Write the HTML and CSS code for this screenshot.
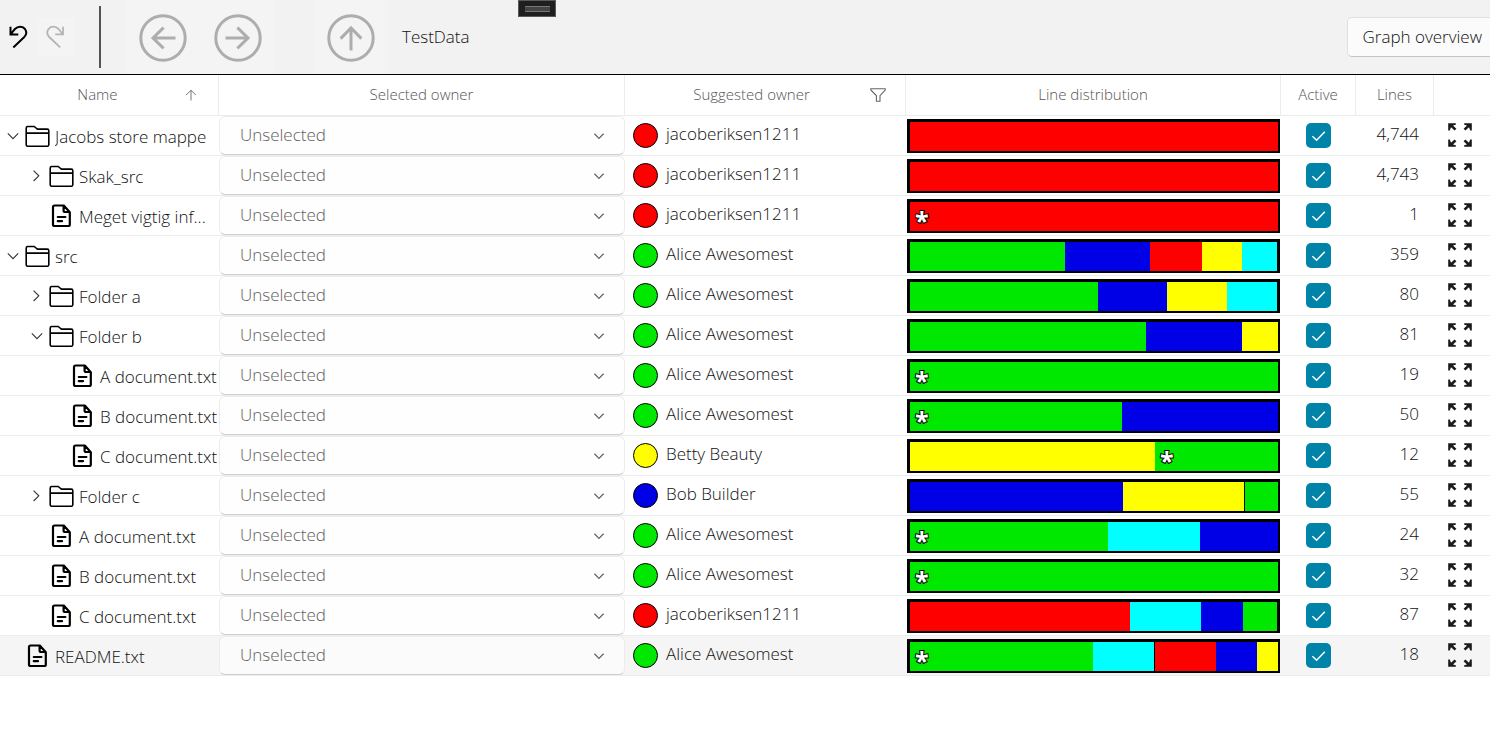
FILE: index.html
```html
<!DOCTYPE html>
<html lang="en">
<head>
<meta charset="utf-8">
<title>TestData</title>
<link rel="stylesheet" href="styles.css">
</head>
<body>
<svg class="sprite" aria-hidden="true">
  <symbol id="folder" viewBox="0 0 25 24"><path d="M1.2 20.7V4.1Q1.2 2.5 2.8 2.5H9.2L12.4 5.1H22.2Q23.8 5.1 23.8 6.7V20.7Q23.8 22.3 22.2 22.3H2.8Q1.2 22.3 1.2 20.7ZM1.2 9.1H23.8" fill="none" stroke="#000" stroke-width="1.6" stroke-linejoin="round"/></symbol>
  <symbol id="doc" viewBox="0 0 25 24"><path d="M13.5 1.5H5.6Q4 1.5 4 3.1V20.4Q4 22 5.6 22H19.2Q20.8 22 20.8 20.4V8.2L14.8 1.5ZM14.6 1.8V6.4Q14.6 8 16.2 8H20.4M8.8 13H16.4M8.8 17.2H13" fill="none" stroke="#000" stroke-width="2.2" stroke-linejoin="round" stroke-linecap="round"/></symbol>
  <symbol id="down" viewBox="0 0 12 12"><path d="M.8 3.4L6 8.6L11.2 3.4" fill="none" stroke="#333" stroke-width="1.1"/></symbol>
  <symbol id="right" viewBox="0 0 12 12"><path d="M2.6 .6L7.8 5.8L2.6 11" fill="none" stroke="#333" stroke-width="1.1"/></symbol>
  <symbol id="drop" viewBox="0 0 12 12"><path d="M1.4 3.8L6 8.4L10.6 3.8" fill="none" stroke="#666" stroke-width="1.3"/></symbol>
  <symbol id="check" viewBox="0 0 25 25"><path d="M6.4 13.2L10.6 17.2L18.8 8.8" fill="none" stroke="#fff" stroke-width="1.5"/></symbol>
  <symbol id="expand" viewBox="0 0 24 24"><g id="corner"><path d="M.2 .2H7.8V1.8L5 2.6L8.4 5.8L6.6 7.4L3 4.2L1.8 7.6H.2Z" fill="#1a1a1a"/></g><use href="#corner" transform="matrix(-1 0 0 1 24 0)"/><use href="#corner" transform="matrix(1 0 0 -1 0 24)"/><use href="#corner" transform="matrix(-1 0 0 -1 24 24)"/></symbol>
</svg>

<header class="toolbar">
  <button class="tool small" aria-label="Undo"><svg width="20" height="24" viewBox="0 0 20 24"><path d="M1.5 1.8V9.4H9.3M1.7 9.2L5.9 4C9.3 .6 13.9 1.2 16.1 4.2C17.9 7 17.5 9.8 15.3 12L4.3 22.4" fill="none" stroke="#000" stroke-width="2"/></svg></button>
  <button class="tool small pale" aria-label="Redo" disabled><svg width="20" height="24" viewBox="0 0 20 24"><path d="M17 1.8V9.4H9.2M16.8 9.2L12.6 4C9.2 .6 4.6 1.2 2.4 4.2C.6 7 1 9.8 3.2 12L14.2 22.4" fill="none" stroke="#b4b4b4" stroke-width="1.8"/></svg></button>
  <span class="divider"></span>
  <button class="tool nav pale" aria-label="Back" disabled><svg width="50" height="50" viewBox="0 0 50 50"><g fill="none" stroke="#adadad" stroke-width="3"><circle cx="25" cy="25" r="22.2"/><path d="M37.5 25H15M25.6 14.6L15 25L25.6 35.4"/></g></svg></button>
  <button class="tool nav pale" aria-label="Forward" disabled><svg width="50" height="50" viewBox="0 0 50 50"><g fill="none" stroke="#adadad" stroke-width="3"><circle cx="25" cy="25" r="22.2"/><path d="M12.5 25H35M24.4 14.6L35 25L24.4 35.4"/></g></svg></button>
  <button class="tool nav pale up" aria-label="Up" disabled><svg width="50" height="50" viewBox="0 0 50 50"><g fill="none" stroke="#adadad" stroke-width="3"><circle cx="25" cy="25" r="22.2"/><path d="M25 37.5V15M14.6 25.6L25 15L35.4 25.6"/></g></svg></button>
  <span class="path">TestData</span>
  <button class="overview">Graph overview</button>
  <span class="grip"></span>
</header>

<table class="grid">
  <colgroup><col class="c-name"><col><col class="c-suggested"><col class="c-dist"><col class="c-active"><col class="c-lines"><col class="c-expand"></colgroup>
  <thead>
    <tr>
      <th><div class="head sorted"><span>Name</span><svg width="12" height="12" viewBox="0 0 12 12"><path d="M6 11.5V1.2M1.2 6L6 1.2L10.8 6" fill="none" stroke="#777"/></svg></div></th>
      <th>Selected owner</th>
      <th><div class="head filtered"><span>Suggested owner</span><svg width="16" height="14" viewBox="0 0 16 14"><path d="M.8 .8H15.2V2L10 7.6V13.2H6.4V7.6L.8 2Z" fill="none" stroke="#666" stroke-width="1.1"/></svg></div></th>
      <th>Line distribution</th>
      <th>Active</th>
      <th>Lines</th>
      <th></th>
    </tr>
  </thead>
  <tbody>
    <tr>
      <td><div class="node"><button class="twist" aria-label="Collapse"><svg><use href="#down"/></svg></button><svg class="kind"><use href="#folder"/></svg><span class="label">Jacobs store mappe</span></div></td>
      <td><div class="pick"><select aria-label="Selected owner"><option>Unselected</option></select><svg><use href="#drop"/></svg></div></td>
      <td><div class="owner"><i class="dot red"></i><span>jacoberiksen1211</span></div></td>
      <td><div class="bar"><i class="red" style="flex-grow:368"></i></div></td>
      <td><label class="tick"><input type="checkbox" aria-label="Active" checked><svg><use href="#check"/></svg></label></td>
      <td class="num">4,744</td>
      <td><button class="expand" aria-label="Expand"><svg><use href="#expand"/></svg></button></td>
    </tr>
    <tr>
      <td><div class="node l1"><button class="twist" aria-label="Expand"><svg><use href="#right"/></svg></button><svg class="kind"><use href="#folder"/></svg><span class="label">Skak_src</span></div></td>
      <td><div class="pick"><select aria-label="Selected owner"><option>Unselected</option></select><svg><use href="#drop"/></svg></div></td>
      <td><div class="owner"><i class="dot red"></i><span>jacoberiksen1211</span></div></td>
      <td><div class="bar"><i class="red" style="flex-grow:368"></i></div></td>
      <td><label class="tick"><input type="checkbox" aria-label="Active" checked><svg><use href="#check"/></svg></label></td>
      <td class="num">4,743</td>
      <td><button class="expand" aria-label="Expand"><svg><use href="#expand"/></svg></button></td>
    </tr>
    <tr>
      <td><div class="node l1"><span class="twist"></span><svg class="kind"><use href="#doc"/></svg><span class="label">Meget vigtig inf...</span></div></td>
      <td><div class="pick"><select aria-label="Selected owner"><option>Unselected</option></select><svg><use href="#drop"/></svg></div></td>
      <td><div class="owner"><i class="dot red"></i><span>jacoberiksen1211</span></div></td>
      <td><div class="bar"><i class="red" style="flex-grow:368"><b>*</b></i></div></td>
      <td><label class="tick"><input type="checkbox" aria-label="Active" checked><svg><use href="#check"/></svg></label></td>
      <td class="num">1</td>
      <td><button class="expand" aria-label="Expand"><svg><use href="#expand"/></svg></button></td>
    </tr>
    <tr>
      <td><div class="node"><button class="twist" aria-label="Collapse"><svg><use href="#down"/></svg></button><svg class="kind"><use href="#folder"/></svg><span class="label">src</span></div></td>
      <td><div class="pick"><select aria-label="Selected owner"><option>Unselected</option></select><svg><use href="#drop"/></svg></div></td>
      <td><div class="owner"><i class="dot green"></i><span>Alice Awesomest</span></div></td>
      <td><div class="bar"><i class="green" style="flex-grow:155"></i><i class="blue" style="flex-grow:85"></i><i class="red" style="flex-grow:52"></i><i class="yellow" style="flex-grow:40"></i><i class="cyan" style="flex-grow:35"></i><i style="flex-grow:1"></i></div></td>
      <td><label class="tick"><input type="checkbox" aria-label="Active" checked><svg><use href="#check"/></svg></label></td>
      <td class="num">359</td>
      <td><button class="expand" aria-label="Expand"><svg><use href="#expand"/></svg></button></td>
    </tr>
    <tr>
      <td><div class="node l1"><button class="twist" aria-label="Expand"><svg><use href="#right"/></svg></button><svg class="kind"><use href="#folder"/></svg><span class="label">Folder a</span></div></td>
      <td><div class="pick"><select aria-label="Selected owner"><option>Unselected</option></select><svg><use href="#drop"/></svg></div></td>
      <td><div class="owner"><i class="dot green"></i><span>Alice Awesomest</span></div></td>
      <td><div class="bar"><i class="green" style="flex-grow:188"></i><i class="blue" style="flex-grow:69"></i><i class="yellow" style="flex-grow:60"></i><i class="cyan" style="flex-grow:50"></i><i style="flex-grow:1"></i></div></td>
      <td><label class="tick"><input type="checkbox" aria-label="Active" checked><svg><use href="#check"/></svg></label></td>
      <td class="num">80</td>
      <td><button class="expand" aria-label="Expand"><svg><use href="#expand"/></svg></button></td>
    </tr>
    <tr>
      <td><div class="node l1"><button class="twist" aria-label="Collapse"><svg><use href="#down"/></svg></button><svg class="kind"><use href="#folder"/></svg><span class="label">Folder b</span></div></td>
      <td><div class="pick"><select aria-label="Selected owner"><option>Unselected</option></select><svg><use href="#drop"/></svg></div></td>
      <td><div class="owner"><i class="dot green"></i><span>Alice Awesomest</span></div></td>
      <td><div class="bar"><i class="green" style="flex-grow:236"></i><i class="blue" style="flex-grow:96"></i><i class="yellow" style="flex-grow:36"></i></div></td>
      <td><label class="tick"><input type="checkbox" aria-label="Active" checked><svg><use href="#check"/></svg></label></td>
      <td class="num">81</td>
      <td><button class="expand" aria-label="Expand"><svg><use href="#expand"/></svg></button></td>
    </tr>
    <tr>
      <td><div class="node l2"><span class="twist"></span><svg class="kind"><use href="#doc"/></svg><span class="label">A document.txt</span></div></td>
      <td><div class="pick"><select aria-label="Selected owner"><option>Unselected</option></select><svg><use href="#drop"/></svg></div></td>
      <td><div class="owner"><i class="dot green"></i><span>Alice Awesomest</span></div></td>
      <td><div class="bar"><i class="green" style="flex-grow:368"><b>*</b></i></div></td>
      <td><label class="tick"><input type="checkbox" aria-label="Active" checked><svg><use href="#check"/></svg></label></td>
      <td class="num">19</td>
      <td><button class="expand" aria-label="Expand"><svg><use href="#expand"/></svg></button></td>
    </tr>
    <tr>
      <td><div class="node l2"><span class="twist"></span><svg class="kind"><use href="#doc"/></svg><span class="label">B document.txt</span></div></td>
      <td><div class="pick"><select aria-label="Selected owner"><option>Unselected</option></select><svg><use href="#drop"/></svg></div></td>
      <td><div class="owner"><i class="dot green"></i><span>Alice Awesomest</span></div></td>
      <td><div class="bar"><i class="green" style="flex-grow:212"><b>*</b></i><i class="blue" style="flex-grow:156"></i></div></td>
      <td><label class="tick"><input type="checkbox" aria-label="Active" checked><svg><use href="#check"/></svg></label></td>
      <td class="num">50</td>
      <td><button class="expand" aria-label="Expand"><svg><use href="#expand"/></svg></button></td>
    </tr>
    <tr>
      <td><div class="node l2"><span class="twist"></span><svg class="kind"><use href="#doc"/></svg><span class="label">C document.txt</span></div></td>
      <td><div class="pick"><select aria-label="Selected owner"><option>Unselected</option></select><svg><use href="#drop"/></svg></div></td>
      <td><div class="owner"><i class="dot yellow"></i><span>Betty Beauty</span></div></td>
      <td><div class="bar"><i class="yellow" style="flex-grow:245"></i><i class="green" style="flex-grow:123"><b>*</b></i></div></td>
      <td><label class="tick"><input type="checkbox" aria-label="Active" checked><svg><use href="#check"/></svg></label></td>
      <td class="num">12</td>
      <td><button class="expand" aria-label="Expand"><svg><use href="#expand"/></svg></button></td>
    </tr>
    <tr>
      <td><div class="node l1"><button class="twist" aria-label="Expand"><svg><use href="#right"/></svg></button><svg class="kind"><use href="#folder"/></svg><span class="label">Folder c</span></div></td>
      <td><div class="pick"><select aria-label="Selected owner"><option>Unselected</option></select><svg><use href="#drop"/></svg></div></td>
      <td><div class="owner"><i class="dot blue"></i><span>Bob Builder</span></div></td>
      <td><div class="bar"><i class="blue" style="flex-grow:213"></i><i class="yellow" style="flex-grow:121"></i><i style="flex-grow:1"></i><i class="green" style="flex-grow:33"></i></div></td>
      <td><label class="tick"><input type="checkbox" aria-label="Active" checked><svg><use href="#check"/></svg></label></td>
      <td class="num">55</td>
      <td><button class="expand" aria-label="Expand"><svg><use href="#expand"/></svg></button></td>
    </tr>
    <tr>
      <td><div class="node l1"><span class="twist"></span><svg class="kind"><use href="#doc"/></svg><span class="label">A document.txt</span></div></td>
      <td><div class="pick"><select aria-label="Selected owner"><option>Unselected</option></select><svg><use href="#drop"/></svg></div></td>
      <td><div class="owner"><i class="dot green"></i><span>Alice Awesomest</span></div></td>
      <td><div class="bar"><i class="green" style="flex-grow:198"><b>*</b></i><i class="cyan" style="flex-grow:92"></i><i class="blue" style="flex-grow:78"></i></div></td>
      <td><label class="tick"><input type="checkbox" aria-label="Active" checked><svg><use href="#check"/></svg></label></td>
      <td class="num">24</td>
      <td><button class="expand" aria-label="Expand"><svg><use href="#expand"/></svg></button></td>
    </tr>
    <tr>
      <td><div class="node l1"><span class="twist"></span><svg class="kind"><use href="#doc"/></svg><span class="label">B document.txt</span></div></td>
      <td><div class="pick"><select aria-label="Selected owner"><option>Unselected</option></select><svg><use href="#drop"/></svg></div></td>
      <td><div class="owner"><i class="dot green"></i><span>Alice Awesomest</span></div></td>
      <td><div class="bar"><i class="green" style="flex-grow:368"><b>*</b></i></div></td>
      <td><label class="tick"><input type="checkbox" aria-label="Active" checked><svg><use href="#check"/></svg></label></td>
      <td class="num">32</td>
      <td><button class="expand" aria-label="Expand"><svg><use href="#expand"/></svg></button></td>
    </tr>
    <tr>
      <td><div class="node l1"><span class="twist"></span><svg class="kind"><use href="#doc"/></svg><span class="label">C document.txt</span></div></td>
      <td><div class="pick"><select aria-label="Selected owner"><option>Unselected</option></select><svg><use href="#drop"/></svg></div></td>
      <td><div class="owner"><i class="dot red"></i><span>jacoberiksen1211</span></div></td>
      <td><div class="bar"><i class="red" style="flex-grow:220"></i><i class="cyan" style="flex-grow:71"></i><i class="blue" style="flex-grow:42"></i><i class="green" style="flex-grow:34"></i><i style="flex-grow:1"></i></div></td>
      <td><label class="tick"><input type="checkbox" aria-label="Active" checked><svg><use href="#check"/></svg></label></td>
      <td class="num">87</td>
      <td><button class="expand" aria-label="Expand"><svg><use href="#expand"/></svg></button></td>
    </tr>
    <tr class="current">
      <td><div class="node"><span class="twist"></span><svg class="kind"><use href="#doc"/></svg><span class="label">README.txt</span></div></td>
      <td><div class="pick"><select aria-label="Selected owner"><option>Unselected</option></select><svg><use href="#drop"/></svg></div></td>
      <td><div class="owner"><i class="dot green"></i><span>Alice Awesomest</span></div></td>
      <td><div class="bar"><i class="green" style="flex-grow:183"><b>*</b></i><i class="cyan" style="flex-grow:61"></i><i style="flex-grow:1"></i><i class="red" style="flex-grow:61"></i><i class="blue" style="flex-grow:41"></i><i class="yellow" style="flex-grow:21"></i></div></td>
      <td><label class="tick"><input type="checkbox" aria-label="Active" checked><svg><use href="#check"/></svg></label></td>
      <td class="num">18</td>
      <td><button class="expand" aria-label="Expand"><svg><use href="#expand"/></svg></button></td>
    </tr>
  </tbody>
</table>
</body>
</html>
```
FILE: styles.css
```css
* { box-sizing: border-box; }

body {
  margin: 0;
  background: #fff;
  color: #111;
  font: 350 17px/24px "Open Sans", "Noto Sans", sans-serif;
}

button, select {
  font: inherit;
  color: inherit;
  margin: 0;
  padding: 0;
  border: 0;
  background: none;
}

svg { display: block; flex: none; }
.sprite { position: absolute; width: 0; height: 0; }

/* Toolbar */
.toolbar {
  position: relative;
  display: flex;
  align-items: center;
  height: 75px;
  overflow: hidden;
  background: #f2f2f2;
  border-bottom: 1px solid #000;
}
.tool { display: grid; place-items: center; flex: none; }
.small { width: 37px; height: 38px; }
.pale { background: #f4f4f4; }
.nav { width: 75px; height: 74px; padding-top: 2px; }
.up { margin-left: 38px; }
.divider { width: 2px; height: 62px; margin: 0 24px 0 25px; background: #555; }
.path { margin-left: 14px; }
.overview {
  height: 40px;
  margin: 0 -8px 0 auto;
  padding: 0 15px;
  background: #fbfbfb;
  border: 1px solid #e0e0e0;
  border-bottom-color: #c4c4c4;
  border-radius: 5px;
}
.grip {
  position: absolute;
  top: 0;
  left: 518px;
  display: grid;
  place-items: center;
  width: 38px;
  height: 17px;
  background: #1f1f1f;
  border: 1px solid #5a5a5a;
}
.grip::before {
  content: "";
  width: 25px;
  height: 4px;
  background: #444;
  border: solid #777;
  border-width: 1px 0;
}

/* Owner grid */
.grid {
  width: 100%;
  table-layout: fixed;
  border-collapse: separate;
  border-spacing: 0;
}
.c-name { width: 219px; }
.c-suggested { width: 281px; }
.c-dist { width: 375px; }
.c-active { width: 75px; }
.c-lines { width: 78px; }
.c-expand { width: 56px; }

th {
  height: 41px;
  padding: 0 0 2px;
  border-right: 1px solid #ececec;
  border-bottom: 1px solid #ececec;
  color: #555;
  font-size: 15px;
  font-weight: 300;
  text-align: center;
}
th:last-child { border-right: 0; }
.head {
  display: grid;
  align-items: center;
  justify-items: center;
  padding-right: 15px;
}
.head span { grid-column: 2; }
.sorted { grid-template-columns: 16px 1fr 24px; }
.filtered { grid-template-columns: 12px 1fr 24px; }
.head svg { margin-top: 2px; }

td {
  height: 40px;
  padding: 0;
  border-bottom: 1px solid #ececec;
}
.current td { background: #f5f5f5; }

.node { display: flex; align-items: center; }
.l1 { padding-left: 24px; }
.l2 { padding-left: 45px; }
.twist { display: grid; place-items: center; flex: none; width: 25px; height: 24px; }
.twist svg { width: 12px; height: 12px; }
.kind { width: 25px; height: 24px; margin-right: 5px; }
.label {
  min-width: 0;
  padding-top: 3px;
  overflow: hidden;
  white-space: nowrap;
  text-overflow: ellipsis;
}

.pick { display: grid; align-items: center; }
.pick select, .pick svg { grid-area: 1 / 1; }
.pick select {
  appearance: none;
  width: 100%;
  height: 39px;
  padding: 0 40px 2px 20px;
  background: #fefefe;
  border: 1px solid #ececec;
  border-bottom-color: #cfcfcf;
  border-radius: 6px;
  color: #606060;
}
.current select { background: #fbfbfb; }
.pick svg { justify-self: end; width: 12px; height: 12px; margin-right: 20px; pointer-events: none; }

.owner { display: flex; align-items: center; gap: 8px; padding-left: 8px; }
.owner span { padding-bottom: 4px; }
.dot { width: 25px; height: 25px; border: 1px solid #000; border-radius: 50%; }

.bar {
  display: flex;
  height: 34px;
  margin: 0 1px;
  background: #000;
  border: solid #000;
  border-width: 3px 2px 2px 3px;
}
.bar i { flex: 0 0 0; min-width: 0; font-style: normal; }
.bar b {
  display: block;
  padding: 2px 0 0 5px;
  color: #fff;
  font-size: 25px;
  line-height: 32px;
  font-weight: 700;
  -webkit-text-stroke: 2px #000;
  paint-order: stroke fill;
}
.red { background: #f00; }
.green { background: #00e800; }
.blue { background: #0000e6; }
.yellow { background: #ff0; }
.cyan { background: #0ff; }

.tick { display: grid; place-items: center; }
.tick input, .tick svg { grid-area: 1 / 1; width: 25px; height: 25px; margin: 0; }
.tick input { appearance: none; background: #ddd; border-radius: 5px; }
.tick input:checked { background: #0083a8; }
.tick svg { pointer-events: none; }

.num { padding: 0 15px 3px 0; text-align: right; }
.expand { display: block; margin: 0 0 2px 14px; }
.expand svg { width: 24px; height: 24px; }
```
